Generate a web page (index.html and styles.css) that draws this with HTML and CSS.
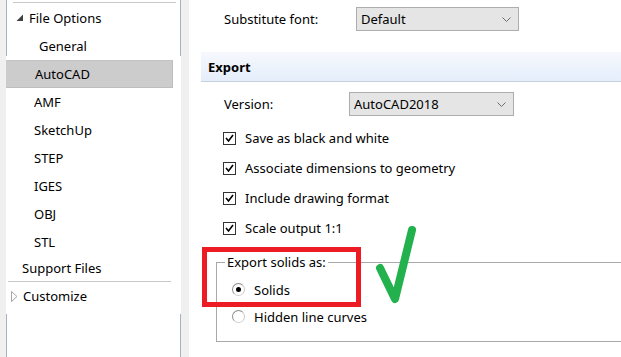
FILE: index.html
```html
<!DOCTYPE html>
<html>
<head>
<meta charset="utf-8">
<link rel="stylesheet" href="styles.css">
</head>
<body>
<div class="app">
  <nav class="sidebar">
    <div class="sep sep-top"></div>
    <div class="item lvl0"><svg class="tw" width="8" height="8" viewBox="0 0 8 8"><polygon points="7,0.5 7,7 0.5,7" fill="#404040"/></svg>File Options</div>
    <div class="item lvl1b">General</div>
    <div class="item lvl1 selected">AutoCAD</div>
    <div class="item lvl1">AMF</div>
    <div class="item lvl1">SketchUp</div>
    <div class="item lvl1">STEP</div>
    <div class="item lvl1">IGES</div>
    <div class="item lvl1">OBJ</div>
    <div class="item lvl1 short">STL</div>
    <div class="item lvl0b short2">Support Files</div>
    <div class="sep sep-bottom"></div>
    <div class="item lvl0c"><svg class="tw2" width="7" height="11" viewBox="0 0 7 11"><polygon points="0.5,0.5 6,5.5 0.5,10.5" fill="#fff" stroke="#a6a6a6"/></svg>Customize</div>
  </nav>
  <div class="gutter"></div>
  <main class="main">
    <div class="row row-sub">
      <span class="label label-sub">Substitute font:</span>
      <div class="combo combo-sub"><span>Default</span><svg class="chev" width="9" height="5" viewBox="0 0 9 5"><polyline points="0.5,0.5 4.5,4.5 8.5,0.5" fill="none" stroke="#6d6d6d"/></svg></div>
    </div>
    <div class="header">Export</div>
    <div class="row row-ver">
      <span class="label label-ver">Version:</span>
      <div class="combo combo-ver"><span>AutoCAD2018</span><svg class="chev" width="9" height="5" viewBox="0 0 9 5"><polyline points="0.5,0.5 4.5,4.5 8.5,0.5" fill="none" stroke="#6d6d6d"/></svg></div>
    </div>
    <div class="checks">
      <div class="check"><span class="box"><svg width="11" height="11" viewBox="0 0 11 11"><polyline points="2,5 4.5,8 9,2" fill="none" stroke="#000" stroke-width="1.6"/></svg></span>Save as black and white</div>
      <div class="check"><span class="box"><svg width="11" height="11" viewBox="0 0 11 11"><polyline points="2,5 4.5,8 9,2" fill="none" stroke="#000" stroke-width="1.6"/></svg></span>Associate dimensions to geometry</div>
      <div class="check"><span class="box"><svg width="11" height="11" viewBox="0 0 11 11"><polyline points="2,5 4.5,8 9,2" fill="none" stroke="#000" stroke-width="1.6"/></svg></span>Include drawing format</div>
      <div class="check"><span class="box"><svg width="11" height="11" viewBox="0 0 11 11"><polyline points="2,5 4.5,8 9,2" fill="none" stroke="#000" stroke-width="1.6"/></svg></span>Scale output 1:1</div>
    </div>
    <fieldset class="group">
      <legend>Export solids as:</legend>
      <div class="radio first"><span class="dot on"></span>Solids</div>
      <div class="radio"><span class="dot"></span>Hidden line curves</div>
    </fieldset>
  </main>
</div>
<div class="mark-box"></div>
<svg class="mark-check" width="60" height="100" viewBox="0 0 60 100"><path d="M6 46 L21 77 L38 8" fill="none" stroke="#22b14c" stroke-width="8" stroke-linecap="round" stroke-linejoin="round"/></svg>
</body>
</html>
```
FILE: styles.css
```css
html, body {
  margin: 0;
  padding: 0;
  width: 621px;
  height: 357px;
  overflow: hidden;
  background: #f0f0f0;
  font-family: "Noto Sans", "Open Sans", sans-serif;
  font-size: 13px;
  color: #000;
}
.app {
  display: flex;
  height: 357px;
}
.sidebar {
  margin-left: 6px;
  width: 173px;
  background: #fff;
  border-left: 1px solid transparent;
  border-image: linear-gradient(to bottom, #a7b3c4 0 57px, transparent 57px 313px, #a7b3c4 313px) 1;
  border-right: 1px solid #a3b1c6;
  display: flex;
  flex-direction: column;
}
.sep {
  height: 1px;
  background: #c8c8c8;
}
.sep-top {
  margin: 2px 4px 0 6px;
}
.sep-bottom {
  margin: 0 9px 0 1px;
}
.item {
  height: 28px;
  display: flex;
  align-items: center;
  white-space: nowrap;
  box-sizing: border-box;
  margin-right: 7px;
}
.item.short { height: 27px; }
.item.short2 { height: 26px; }
.lvl0 { padding-left: 9px; height: 29px; }
.lvl1b { padding-left: 32px; }
.lvl1 { padding-left: 27px; }
.lvl0b { padding-left: 15px; }
.lvl0c { padding-left: 4px; }
.tw { margin-right: 5px; margin-top: 1px; }
.tw2 { margin-right: 5px; }
.selected {
  margin-left: -1px;
  padding-left: 28px;
  background: #cccccc;
  border: 1px solid #bdbdbd;
  border-left-color: #cccccc;
  border-top-color: #c4c4c4;
}
.gutter {
  width: 8px;
  flex: none;
}
.main {
  flex: 1;
  background: #fff;
  display: flex;
  flex-direction: column;
  padding-top: 7px;
  overflow: hidden;
}
.row {
  display: flex;
  align-items: center;
  height: 24px;
  padding-left: 35px;
}
.label { white-space: nowrap; flex: none; }
.label-sub { width: 132px; }
.label-ver { width: 125px; }
.combo {
  height: 24px;
  box-sizing: border-box;
  border: 1px solid #adadad;
  background: #e5e5e5;
  display: flex;
  align-items: center;
  justify-content: space-between;
  padding: 0 7px 0 4px;
}
.combo-sub { width: 163px; }
.combo-ver { width: 165px; }
.chev { margin-top: 1px; }
.header {
  margin: 21px 0 0 12px;
  height: 30px;
  box-sizing: border-box;
  border-bottom: 1px solid #c5d0dc;
  background: linear-gradient(to bottom, #f6f8fd, #e5eefb);
  font-weight: bold;
  display: flex;
  align-items: center;
  padding-left: 7px;
}
.row-ver { margin-top: 10px; }
.checks {
  margin-top: 7px;
  padding-left: 34px;
  display: flex;
  flex-direction: column;
}
.check {
  height: 30px;
  display: flex;
  align-items: center;
  white-space: nowrap;
}
.box {
  width: 13px;
  height: 13px;
  box-sizing: border-box;
  border: 1px solid #333;
  background: #fff;
  margin-right: 9px;
  display: flex;
  align-items: center;
  justify-content: center;
}
.group {
  margin: 10px -30px 0 27px;
  padding: 0 0 11px 8px;
  border: 1px solid #a9a9a9;
  min-width: 0;
}
.group legend {
  padding: 0 2px;
  line-height: 18px;
}
.radio {
  height: 27px;
  display: flex;
  align-items: center;
  padding-left: 7px;
  white-space: nowrap;
}
.radio.first { margin-top: 5px; }
.dot {
  width: 13px;
  height: 13px;
  box-sizing: border-box;
  border-radius: 50%;
  border: 1px solid #8c8c8c;
  border-right-color: #c8c8c8;
  border-bottom-color: #d0d0d0;
  background: #fff;
  margin-right: 9px;
  position: relative;
}
.dot.on::after {
  content: "";
  position: absolute;
  left: 3px;
  top: 3px;
  width: 5px;
  height: 5px;
  border-radius: 50%;
  background: #000;
}
.mark-box {
  position: absolute;
  left: 202px;
  top: 247px;
  width: 159px;
  height: 60px;
  box-sizing: border-box;
  border: 5px solid #ed1c24;
}
.mark-check {
  position: absolute;
  left: 374px;
  top: 222px;
}
```
